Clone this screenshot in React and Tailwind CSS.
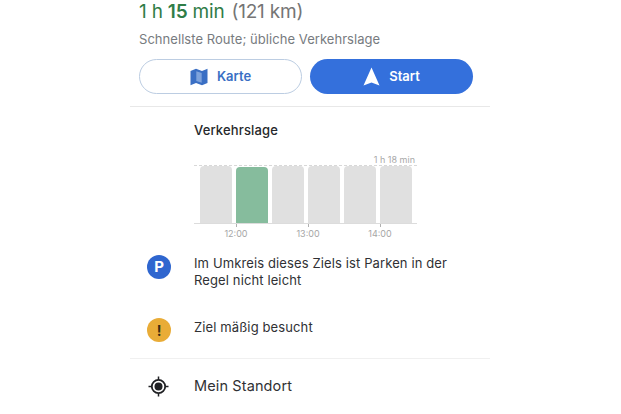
const bars = [false, true, false, false, false, false];
const hours = ['12:00', '13:00', '14:00'];

const Row = ({ icon, children, className }) => (
  <div className={`flex items-start ${className}`}>
    <div className="w-[64px] pl-[17px] shrink-0">{icon}</div>
    <div className="text-[13px] leading-[17px] text-[#303134] tracking-[0.12px]">{children}</div>
  </div>
);

export default function App() {
  return (
    <div className="h-[414px] overflow-hidden bg-white font-['Inter','Liberation_Sans',sans-serif]">
      <div className="w-[360px] ml-[130px]">
        {/* Summary */}
        <div className="pl-[9px] border-b border-[#e8e8e8] h-[107px]">
          <div className="text-[19px] leading-[24px] text-[#757575] whitespace-nowrap tracking-[-0.2px]">
            <span className="text-[#2f7d47]">1 h <span className="font-semibold">15</span> min</span>
            <span className="ml-[7px]">(121 km)</span>
          </div>
          <div className="mt-[7px] text-[13px] leading-[16px] text-[#777b80] tracking-[0.05px]">
            Schnellste Route; übliche Verkehrslage
          </div>
          <div className="mt-[12px] flex gap-[8px]">
            <div className="w-[163px] h-[35px] rounded-full border border-[#bccde2] flex items-center justify-center gap-[9px] text-[#3a6fc4] text-[13px] font-semibold">
              <svg width="18" height="18" viewBox="0 0 18 18" fill="#3a6fc4">
                <path d="M0.5 3 L6 0.8 L12 3 L17.5 0.8 V15 L12 17.2 L6 15 L0.5 17.2 Z" />
                <path d="M6.3 3.2 L11.7 5 V14.8 L6.3 13 Z" fill="#7ea3dc" />
              </svg>
              Karte
            </div>
            <div className="w-[163px] h-[35px] rounded-full bg-[#3470dc] flex items-center justify-center gap-[9px] text-white text-[13px] font-semibold">
              <svg width="17" height="19" viewBox="0 0 17 19" fill="white">
                <path d="M8.5 0.5 L16.5 18.5 L8.5 15.5 L0.5 18.5 Z" />
              </svg>
              Start
            </div>
          </div>
        </div>

        {/* Traffic */}
        <div className="pl-[64px] pt-[15px]">
          <div className="text-[13px] leading-[17px] font-medium text-[#26282b] tracking-[0.15px]">Verkehrslage</div>
          <div className="relative w-[223px] mt-[26px]">
            <div className="absolute right-[2px] top-[-10px] text-[9px] leading-[10px] text-[#a8a8a8]">1 h 18 min</div>
            <div className="h-[58px] border-t border-dashed border-[#d8d8d8] pl-[6px] flex gap-[4px] items-end">
              {bars.map((on, i) => (
                <div
                  key={i}
                  className={`w-[32px] rounded-t-[4px] ${on ? 'h-[56px] bg-[#86bc9d]' : 'h-[57px] bg-[#e0e0e0]'}`}
                />
              ))}
            </div>
            <div className="h-px bg-[#dcdcdc]" />
            <div className="flex pl-[6px] text-[9px] leading-[10px] text-[#a6a6a6]">
              {hours.map((h) => (
                <div key={h} className="w-[72px] flex flex-col items-center">
                  <div className="w-px h-[3px] bg-[#b0b0b0]" />
                  <div className="mt-[2px]">{h}</div>
                </div>
              ))}
            </div>
          </div>
        </div>

        {/* Info rows */}
        <Row
          className="mt-[16px]"
          icon={
            <div className="w-[24px] h-[24px] rounded-full bg-[#2f66cf] flex items-center justify-center text-white text-[15px] font-bold">P</div>
          }
        >
          Im Umkreis dieses Ziels ist Parken in der
          <br />
          Regel nicht leicht
        </Row>
        <Row
          className="mt-[29px] h-[41px] border-b border-[#f0f0f0]"
          icon={
            <div className="w-[24px] h-[24px] rounded-full bg-[#e9ac37] flex items-center justify-center text-[#3a2d10] text-[14px] font-bold">!</div>
          }
        >
          <div className="pt-[1px]">Ziel mäßig besucht</div>
        </Row>
        <Row
          className="mt-[17px] items-center"
          icon={
            <svg className="block ml-[1px]" width="21" height="21" viewBox="0 0 21 21" fill="none" stroke="#202124">
              <circle cx="10.5" cy="10.5" r="6.7" strokeWidth="1.8" />
              <circle cx="10.5" cy="10.5" r="4" fill="#202124" stroke="none" />
              <path d="M10.5 0.5V4M10.5 17V20.5M0.5 10.5H4M17 10.5H20.5" strokeWidth="1.5" />
            </svg>
          }
        >
          <div className="pt-[1px] text-[14.5px]">Mein Standort</div>
        </Row>
      </div>
    </div>
  );
}
